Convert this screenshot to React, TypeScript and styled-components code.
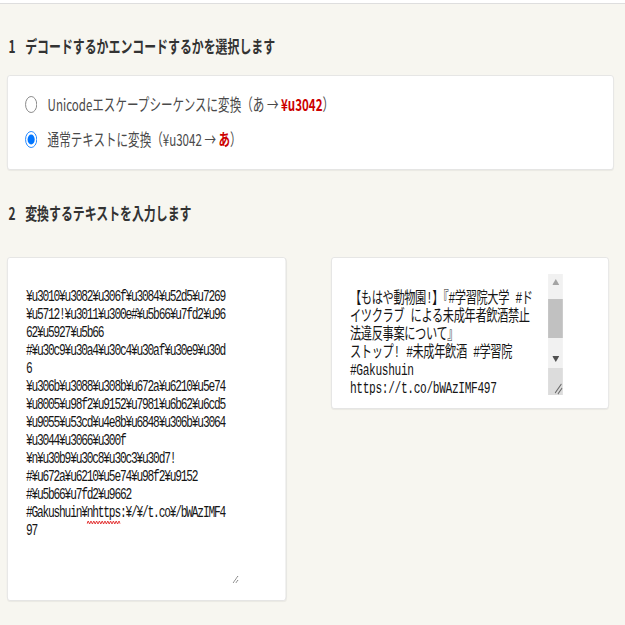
import React, { useLayoutEffect, useRef } from 'react';
import styled, { createGlobalStyle } from 'styled-components';

const K = 0.7;

const GlobalStyle = createGlobalStyle`
  html, body { margin: 0; padding: 0; background: #f7f6f0; overflow: hidden; }
  body { font-family: "Noto Sans CJK JP", "Noto Sans", sans-serif; }
`;

const Page = styled.div`
  width: ${625 / K}px;
  min-height: 625px;
  transform: scaleX(${K});
  transform-origin: 0 0;
  background: #f7f6f0;
`;

const TopBar = styled.div`
  height: 3px;
  background: #ffffff;
  border-bottom: 1px solid #dedede;
`;

const Main = styled.main`
  display: flex;
  flex-direction: column;
  padding: 0 16px 0 10px;
`;

const Heading = styled.h2<{ $top: number; $bottom: number }>`
  display: flex;
  align-items: center;
  gap: 14px;
  margin: ${(p) => p.$top}px 0 ${(p) => p.$bottom}px;
  padding-left: 2px;
  font-size: 17px;
  line-height: 20px;
  font-weight: 700;
  color: #333;
`;

const Card = styled.div`
  display: flex;
  flex-direction: column;
  gap: 15px;
  padding: 18px 20px 20px 25px;
  background: #fff;
  border: 1px solid #e2e2e2;
  border-radius: 4px;
  box-shadow: 0 1px 1px rgba(0, 0, 0, 0.05);
`;

const RadioLabel = styled.label`
  display: flex;
  align-items: center;
  gap: 15px;
  font-size: 16.5px;
  line-height: 20px;
  color: #4a4a4a;
`;

const Radio = styled.input`
  margin: 0;
  width: 17px;
  height: 17px;
`;

const Red = styled.span`
  color: #cc0000;
  font-weight: 700;
`;

const Columns = styled.div`
  display: grid;
  grid-template-columns: 399px 397px;
  column-gap: 64px;
  align-items: start;
`;

const Panel = styled.div<{ $bottom: number }>`
  padding: 16px 16px ${(p) => p.$bottom}px;
  background: #fff;
  border: 1px solid #e2e2e2;
  border-radius: 4px;
  box-shadow: 0 1px 1px rgba(0, 0, 0, 0.05);
`;

const AreaWrap = styled.div`
  position: relative;
  display: flex;
  width: 314px;
`;

const BaseArea = styled.textarea`
  display: block;
  box-sizing: border-box;
  border: none;
  outline: none;
  background: transparent;
  font-family: "Liberation Mono", "Noto Sans CJK JP", monospace;
  font-size: 16px;
  line-height: 18px;
  color: #151515;
  white-space: pre;
`;

const InputArea = styled(BaseArea)`
  width: 314px;
  height: 310px;
  padding: 14px 16px 14px 10px;
  letter-spacing: -1.7px;
  overflow: hidden;
`;

const OutputArea = styled(BaseArea)`
  width: 293px;
  height: 121px;
  padding: 24px 8px 14px 10px;
  letter-spacing: -0.5px;
  overflow: hidden;
  resize: none;
`;

const ScrollBar = styled.div`
  display: flex;
  flex-direction: column;
  width: 21px;
  height: 121px;
  background: #f1f1f1;
`;

const ArrowButton = styled.div<{ $h: number }>`
  display: flex;
  align-items: center;
  justify-content: center;
  height: ${(p) => p.$h}px;
  flex: none;
`;

const Track = styled.div`
  flex: 1;
  display: flex;
  flex-direction: column;
  padding-top: 10px;
`;

const Thumb = styled.div`
  height: 39px;
  background: #c1c1c1;
`;

const Corner = styled.div`
  height: 27px;
  flex: none;
  display: flex;
  align-items: flex-end;
  justify-content: flex-end;
  background: #dcdcdc;
`;

const Squiggle = styled.svg`
  position: absolute;
  left: 97px;
  top: 246px;
  pointer-events: none;
`;

const ESCAPED = [
  '¥u3010¥u3082¥u306f¥u3084¥u52d5¥u7269',
  '¥u5712!¥u3011¥u300e#¥u5b66¥u7fd2¥u96',
  '62¥u5927¥u5b66 ',
  '#¥u30c9¥u30a4¥u30c4¥u30af¥u30e9¥u30d',
  '6 ',
  '¥u306b¥u3088¥u308b¥u672a¥u6210¥u5e74',
  '¥u8005¥u98f2¥u9152¥u7981¥u6b62¥u6cd5',
  '¥u9055¥u53cd¥u4e8b¥u6848¥u306b¥u3064',
  '¥u3044¥u3066¥u300f ',
  '¥n¥u30b9¥u30c8¥u30c3¥u30d7! ',
  '#¥u672a¥u6210¥u5e74¥u98f2¥u9152 ',
  '#¥u5b66¥u7fd2¥u9662 ',
  '#Gakushuin¥nhttps:¥/¥/t.co¥/bWAzIMF4',
  '97',
].join('\n');

const DECODED = [
  '【もはや動物園!】『#学習院大学 #ド',
  'イツクラブ による未成年者飲酒禁止',
  '法違反事案について』',
  'ストップ! #未成年飲酒 #学習院',
  '#Gakushuin',
  'https://t.co/bWAzIMF497',
  '',
].join('\n');

export default function App() {
  const outRef = useRef<HTMLTextAreaElement>(null);
  useLayoutEffect(() => {
    if (outRef.current) outRef.current.scrollTop = 8;
  }, []);

  return (
    <>
      <GlobalStyle />
      <Page>
        <TopBar />
        <Main>
          <Heading $top={32} $bottom={19}>
            <span>1</span>
            <span>デコードするかエンコードするかを選択します</span>
          </Heading>
          <Card>
            <RadioLabel>
              <Radio type="radio" name="mode" />
              <span>
                Unicodeエスケープシーケンスに変換（あ → <Red>¥u3042</Red>）
              </span>
            </RadioLabel>
            <RadioLabel>
              <Radio type="radio" name="mode" defaultChecked />
              <span>
                通常テキストに変換（¥u3042 → <Red>あ</Red>）
              </span>
            </RadioLabel>
          </Card>
          <Heading $top={33} $bottom={34}>
            <span>2</span>
            <span>変換するテキストを入力します</span>
          </Heading>
          <Columns>
            <Panel $bottom={16}>
              <AreaWrap>
                <InputArea defaultValue={ESCAPED} spellCheck={false} />
                <Squiggle width="48" height="5" viewBox="0 0 48 5">
                  <path
                    d="M0 4 L2 1 L4 4 L6 1 L8 4 L10 1 L12 4 L14 1 L16 4 L18 1 L20 4 L22 1 L24 4 L26 1 L28 4 L30 1 L32 4 L34 1 L36 4 L38 1 L40 4 L42 1 L44 4 L46 1 L48 4"
                    fill="none"
                    stroke="#e02020"
                    strokeWidth="1"
                  />
                </Squiggle>
              </AreaWrap>
            </Panel>
            <Panel $bottom={13}>
              <AreaWrap>
                <OutputArea ref={outRef} defaultValue={DECODED} readOnly spellCheck={false} />
                <ScrollBar aria-hidden>
                  <ArrowButton $h={15}>
                    <svg width="10" height="6" viewBox="0 0 10 6">
                      <path d="M0 6 L5 0 L10 6 Z" fill="#a3a3a3" />
                    </svg>
                  </ArrowButton>
                  <Track>
                    <Thumb />
                  </Track>
                  <ArrowButton $h={18}>
                    <svg width="10" height="6" viewBox="0 0 10 6">
                      <path d="M0 0 L10 0 L5 6 Z" fill="#505050" />
                    </svg>
                  </ArrowButton>
                  <Corner>
                    <svg width="14" height="14" viewBox="0 0 14 14">
                      <path d="M12 3 L3 12 M13 7 L7 13" stroke="#6a6a6a" strokeWidth="1.2" />
                    </svg>
                  </Corner>
                </ScrollBar>
              </AreaWrap>
            </Panel>
          </Columns>
        </Main>
      </Page>
    </>
  );
}
